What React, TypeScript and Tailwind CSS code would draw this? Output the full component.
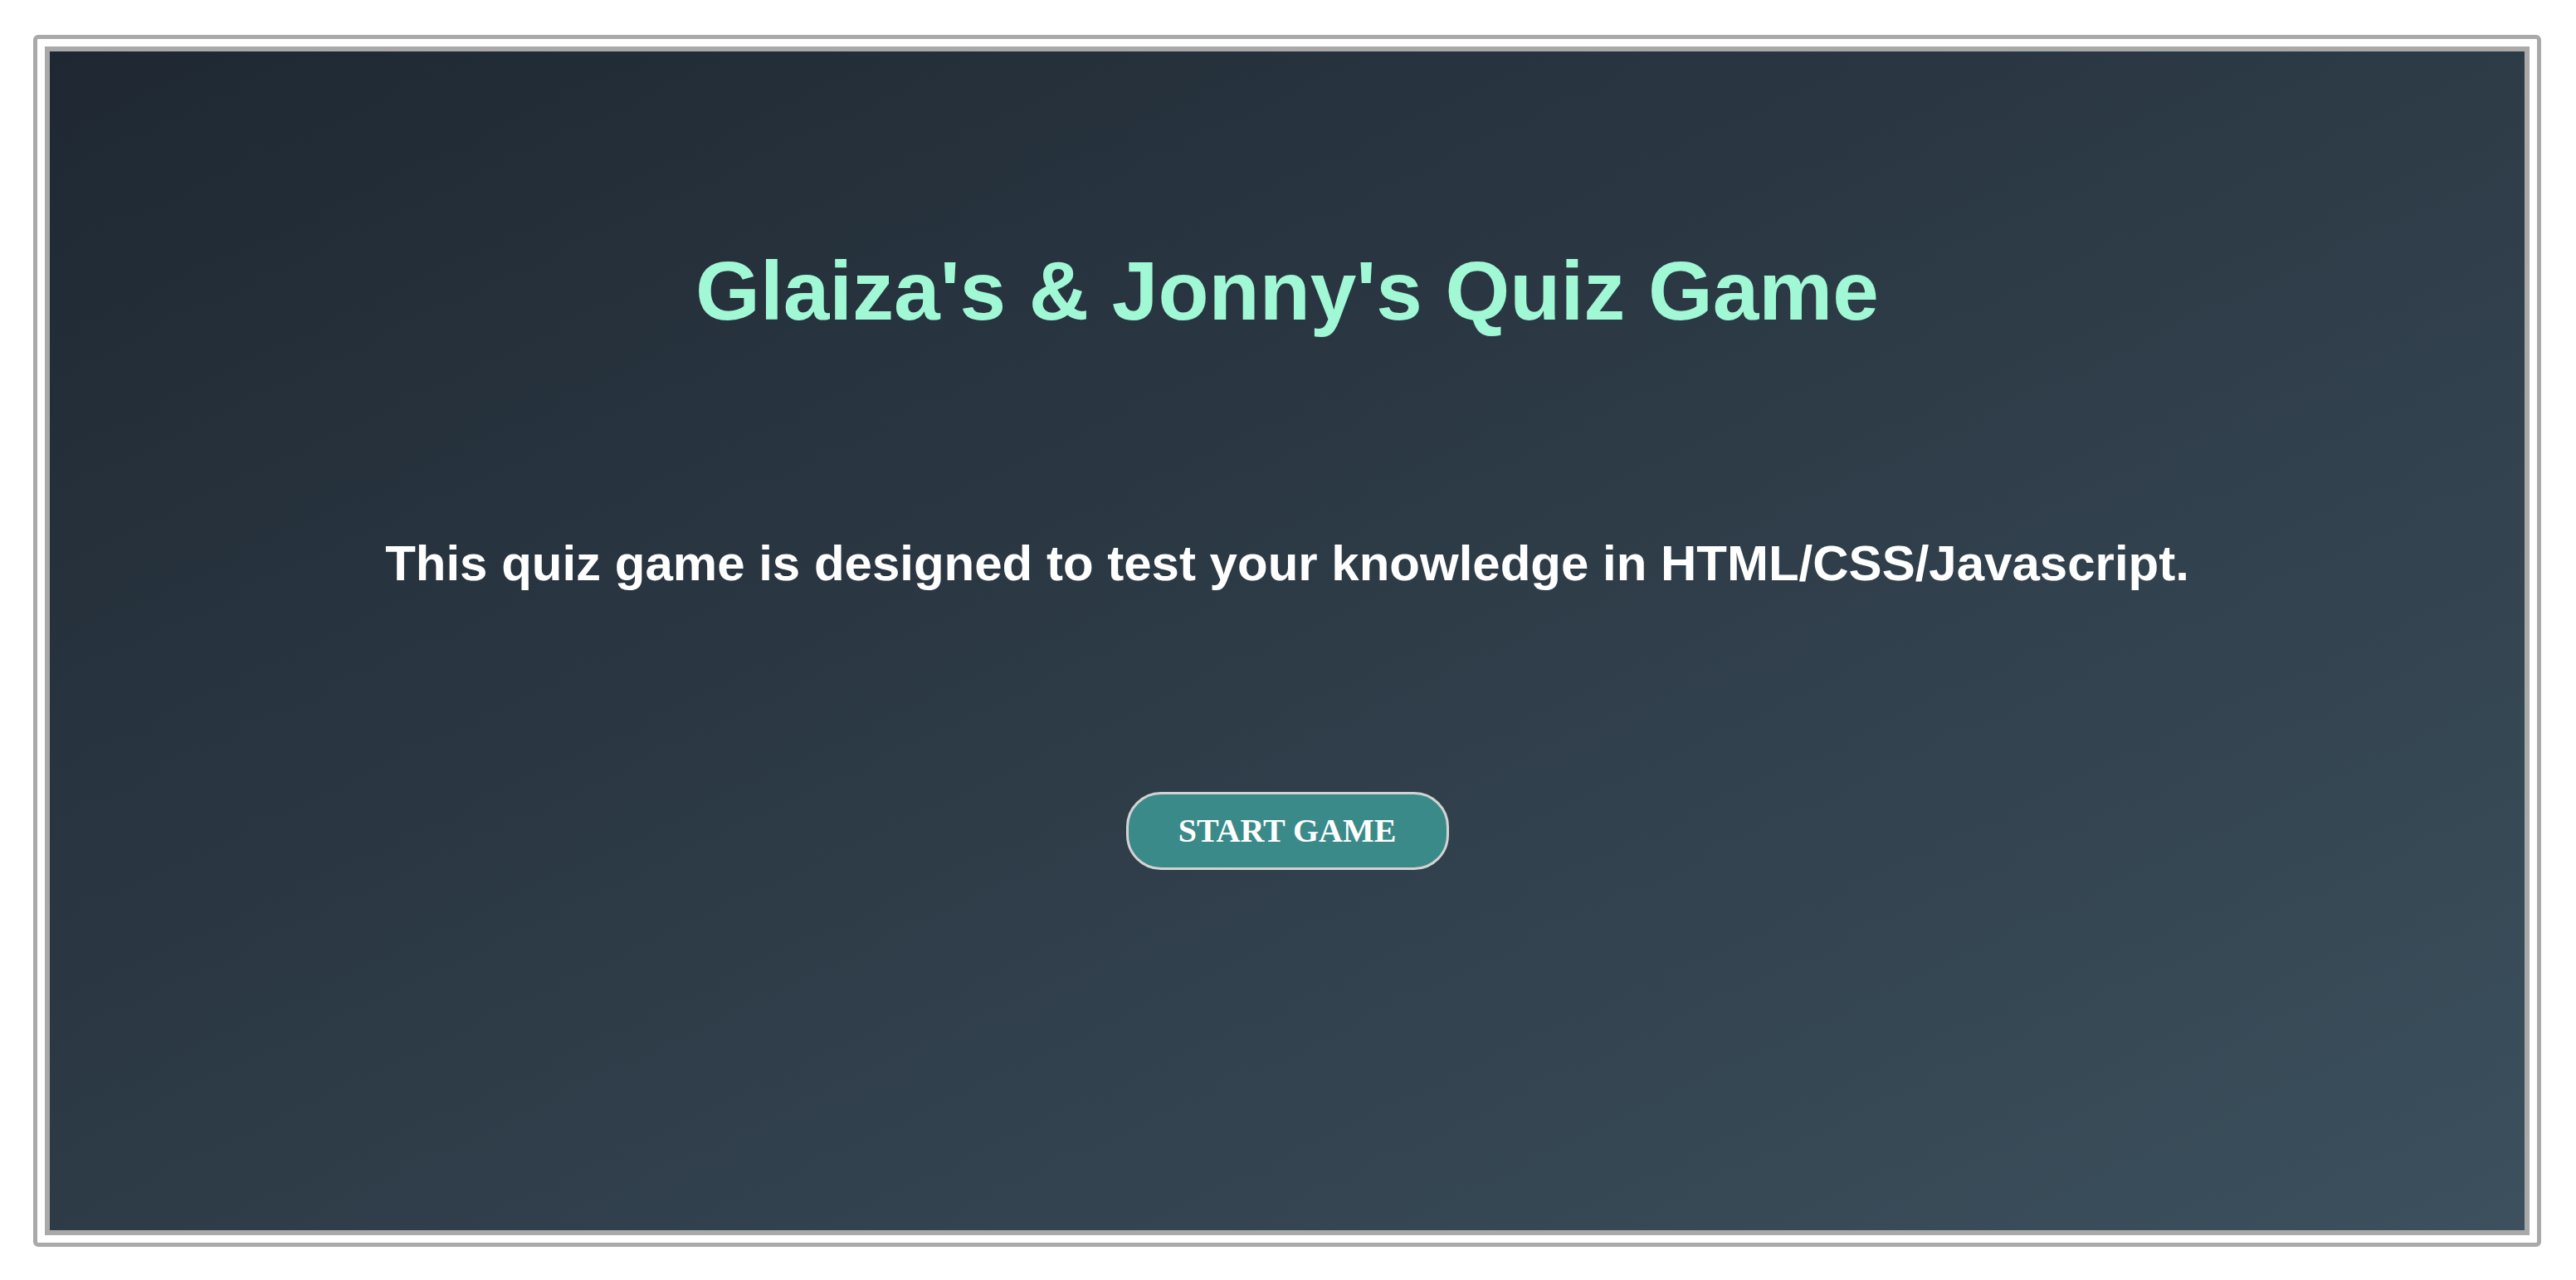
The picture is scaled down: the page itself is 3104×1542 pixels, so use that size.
export default function App() {
    return (
        <div className="min-h-screen bg-white pt-[42px] pl-[40px]">
            <div className="w-[3022px] h-[1460px] border-[5px] border-[#a9a9a9] rounded-[6px] p-[9px]">
                <div className="h-full border-[6px] border-[#a9a9a9] bg-gradient-to-br from-[#1f2832] to-[#3c505d] flex flex-col items-center font-['Liberation_Sans',Arial,sans-serif]">
                    <h1 className="mt-[228px] text-[100px] leading-[120px] font-bold text-[#a0f8d5]">
                        Glaiza's &amp; Jonny's Quiz Game
                    </h1>
                    <p className="mt-[234px] text-[60px] leading-[70px] font-bold text-white">
                        This quiz game is designed to test your knowledge in HTML/CSS/Javascript.
                    </p>
                    <button className="mt-[240px] w-[389px] h-[94px] rounded-[42px] border-[3px] border-[#d3d3d3] bg-[#3b8a8a] text-white font-bold text-[40px] font-['Liberation_Serif','Times_New_Roman',serif]">
                        START GAME
                    </button>
                </div>
            </div>
        </div>
    );
}
